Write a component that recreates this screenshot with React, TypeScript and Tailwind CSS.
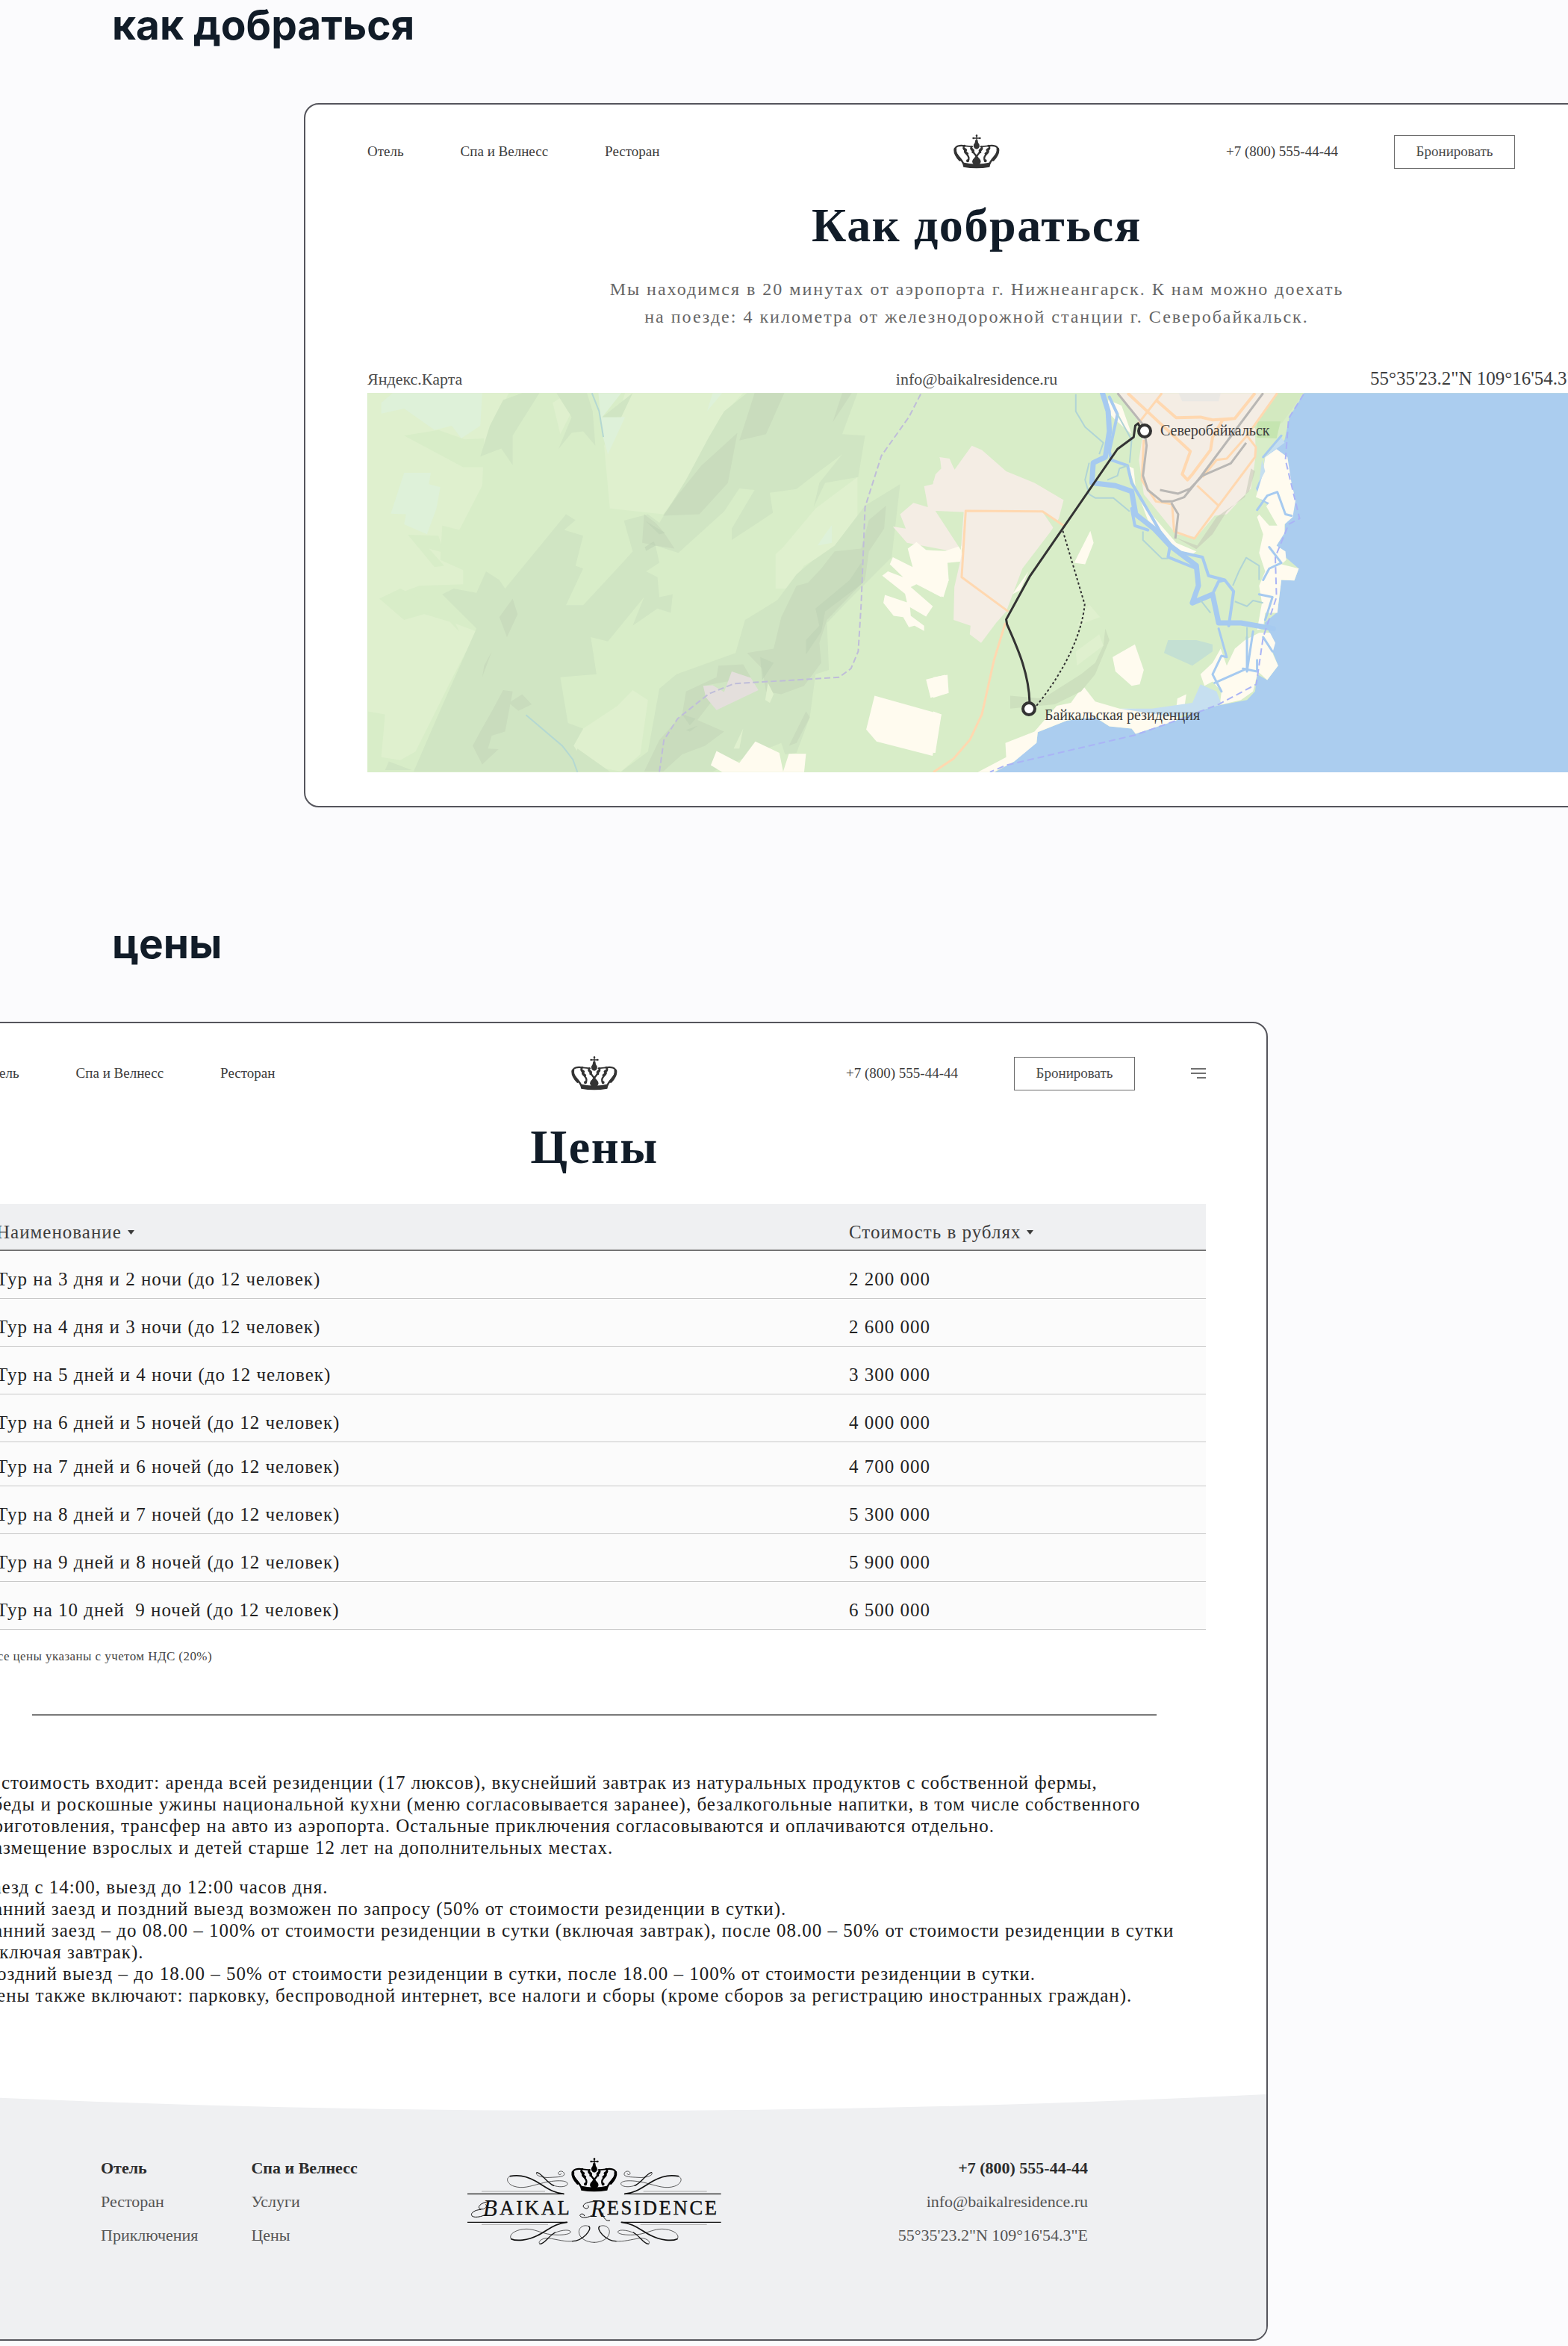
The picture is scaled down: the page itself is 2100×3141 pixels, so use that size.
import type { ReactNode } from 'react';

const navLinks = ['Отель', 'Спа и Велнесс', 'Ресторан'];

const tours = [
  { name: 'Тур на 3 дня и 2 ночи (до 12 человек)', price: '2 200 000' },
  { name: 'Тур на 4 дня и 3 ночи (до 12 человек)', price: '2 600 000' },
  { name: 'Тур на 5 дней и 4 ночи (до 12 человек)', price: '3 300 000' },
  { name: 'Тур на 6 дней и 5 ночей (до 12 человек)', price: '4 000 000' },
  { name: 'Тур на 7 дней и 6 ночей (до 12 человек)', price: '4 700 000', compact: true },
  { name: 'Тур на 8 дней и 7 ночей (до 12 человек)', price: '5 300 000' },
  { name: 'Тур на 9 дней и 8 ночей (до 12 человек)', price: '5 900 000' },
  { name: 'Тур на 10 дней  9 ночей (до 12 человек)', price: '6 500 000' },
];

const included = [
  'В стоимость входит: аренда всей резиденции (17 люксов), вкуснейший завтрак из натуральных продуктов с собственной фермы,',
  'обеды и роскошные ужины национальной кухни (меню согласовывается заранее), безалкогольные напитки, в том числе собственного',
  'приготовления, трансфер на авто из аэропорта. Остальные приключения согласовываются и оплачиваются отдельно.',
  'Размещение взрослых и детей старше 12 лет на дополнительных местах.',
];

const rules = [
  'Заезд с 14:00, выезд до 12:00 часов дня.',
  'Ранний заезд и поздний выезд возможен по запросу (50% от стоимости резиденции в сутки).',
  'Ранний заезд – до 08.00 – 100% от стоимости резиденции в сутки (включая завтрак), после 08.00 – 50% от стоимости резиденции в сутки',
  '(включая завтрак).',
  'Поздний выезд – до 18.00 – 50% от стоимости резиденции в сутки, после 18.00 – 100% от стоимости резиденции в сутки.',
  'Цены также включают: парковку, беспроводной интернет, все налоги и сборы (кроме сборов за регистрацию иностранных граждан).',
];

function CrownHalf() {
  return (
    <g fill="none" stroke="currentColor" strokeLinecap="round" strokeLinejoin="round">
      <path d="M534 224C526 204 502 190 501 170C501 154 520 150 541 154" strokeWidth="7" />
      <path d="M521 210C508 196 499 182 502 166" strokeWidth="11" />
      <path d="M539 153C531 160 537 168 541 172C538 180 546 184 550 190C557 198 559 206 553 214" strokeWidth="7" />
      <path d="M537 164L545 170L542 178L551 185" strokeWidth="9" />
      <path d="M541 154L571 157" strokeWidth="5" />
      <path d="M568 157C562 164 567 170 573 173C572 182 582 186 596 208" strokeWidth="7" />
      <path d="M568 166L574 172L573 179" strokeWidth="10" />
      <circle cx="552" cy="214" r="3" strokeWidth="6" />
    </g>
  );
}

function CrownShape() {
  return (
    <g>
      <CrownHalf />
      <g transform="translate(1175 0) scale(-1 1)">
        <CrownHalf />
      </g>
      <g fill="currentColor">
        <path d="M583 130h9l2 11 5 8q3 14-11 18q-15-4-12-18l5-8z" />
        <ellipse cx="587.5" cy="217" rx="17" ry="16" />
        <path d="M530 220Q587 234 645 220L640 239Q587 249 535 239Z" />
        <path d="M586 110h4v28h-4zM573 121h29v4h-29z" />
        <circle cx="588" cy="113" r="4" />
        <circle cx="575" cy="123" r="4" />
        <circle cx="601" cy="123" r="4" />
      </g>
    </g>
  );
}

function Flourish() {
  return (
    <g fill="none" stroke="#111" strokeLinecap="round">
      <path d="M78 253H465M78 367H478" strokeWidth="4" strokeLinecap="butt" />
      <path d="M135 243H390M135 376H402" stroke="#aaa" strokeWidth="3" strokeLinecap="butt" />
      <path d="M465 253C420 250 392 225 352 202C318 182 280 176 250 182" strokeWidth="5" />
      <path d="M250 182C228 190 240 214 264 222C300 234 330 222 370 212C400 203 470 192 480 210C484 226 440 230 415 215" strokeWidth="2" />
      <path d="M425 220C395 208 380 172 357 167" strokeWidth="4" />
      <path d="M357 167C345 176 375 190 410 187C440 185 470 186 467 172C464 158 444 160 443 170C444 178 453 177 455 172" strokeWidth="2" />
      <path d="M478 367C430 370 400 400 360 420C320 440 275 444 254 434" strokeWidth="5" />
      <path d="M254 434C240 418 270 395 315 394C345 394 370 408 400 414C430 420 488 420 493 406C490 392 440 400 420 415" strokeWidth="2" />
      <path d="M430 408C402 424 388 455 369 454" strokeWidth="4" />
      <path d="M369 454C358 445 378 430 402 431C440 436 470 446 500 443" strokeWidth="2" />
      <path d="M500 443C540 442 582 396 566 383" strokeWidth="4" />
      <path d="M566 383C545 375 528 386 526 404C526 432 558 448 588 448" strokeWidth="2" />
    </g>
  );
}

function BrandLogo() {
  return (
    <svg viewBox="78 108 1020 351" className="w-[340px] text-black" role="img" aria-label="Baikal Residence">
      <CrownShape />
      <Flourish />
      <g transform="translate(1175 0) scale(-1 1)">
        <Flourish />
      </g>
      <g fill="#111" fontFamily="'Liberation Serif', serif">
        <text x="140" y="342" fontSize="94" fontStyle="italic">B</text>
        <text x="208" y="335" fontSize="80" letterSpacing="8" stroke="#111">AIKAL</text>
        <text x="572" y="344" fontSize="98" fontStyle="italic">R</text>
        <text x="638" y="335" fontSize="80" letterSpacing="8" stroke="#111">ESIDENCE</text>
      </g>
      <g fill="none" stroke="#111" strokeWidth="3" strokeLinecap="round">
        <path d="M172 282C118 288 112 318 142 314C154 310 158 300 152 296M132 316C92 318 82 345 110 346C132 346 142 340 156 334" />
        <path d="M600 284C548 280 528 306 556 312C566 310 568 302 562 300M584 336C566 350 534 352 530 340C532 330 548 332 548 341M622 330C624 350 634 364 650 360" />
      </g>
    </svg>
  );
}

function SiteHeader() {
  return (
    <header className="grid grid-cols-[1fr_auto_1fr] items-center text-[19px] leading-6 text-[#3c3c3c]">
      <nav className="flex gap-[76px]">
        {navLinks.map((link) => (
          <a key={link} href="#" className="whitespace-nowrap">{link}</a>
        ))}
      </nav>
      <a href="#" aria-label="Baikal Residence">
        <svg viewBox="496 108 184 138" className="h-[46px] w-[62px] text-[#333]">
          <CrownShape />
        </svg>
      </a>
      <div className="flex items-center justify-end gap-[75px]">
        <a href="tel:+78005554444" className="whitespace-nowrap">+7 (800) 555-44-44</a>
        <button type="button" className="h-[45px] w-[162px] border border-[#6b6b6b] text-[#4a4a4a]">
          Бронировать
        </button>
        <button type="button" aria-label="Меню" className="flex w-5 flex-col items-end gap-1">
          <span className="h-0.5 w-full bg-[#707070]" />
          <span className="h-0.5 w-full bg-[#707070]" />
          <span className="h-0.5 w-3 bg-[#707070]" />
        </button>
      </div>
    </header>
  );
}

function MountainRelief() {
  return (
    <g transform="translate(-12 -25) scale(.5102 .3827)">
      <g fill="#dff0ce">
        <path d="M25 66H395L350 180L330 250L325 390L265 545L220 530L215 650L275 685V735L160 740L60 790L150 830L250 870L310 900L240 1080L150 1320L110 1350L60 1340L70 1190L25 1180Z" />
        <path d="M700 66H1010L950 150L900 280L860 380L800 490L660 470L645 250L680 150ZM510 100L550 66L560 130L530 210Z" />
        <path d="M1310 360L1200 470L1115 605L1095 630V750H1130L1170 670L1260 600L1310 500Z" />
        <path d="M720 1105L680 1160L590 1240L560 1310L610 1370L690 1390L740 1330L760 1140Z" />
      </g>
      <g fill="#d8edc8">
        <path d="M120 215L210 195L280 228L330 225V325H275ZM130 562L210 565L225 625L185 610L225 670L200 675ZM55 785L110 750L190 800L250 860L265 900L210 825L120 860Z" />
      </g>
      <g fill="#def1d9">
        <path d="M60 100L90 66H325L320 180L270 225L245 180L200 195L120 120L60 138Z" />
        <path d="M120 345H190L185 385L215 395L205 470L180 560L120 525L125 490L85 488Z" />
        <path d="M630 66H690L640 150H700L655 280L640 210ZM915 130L930 66H955ZM1205 600L1225 560L1243 528V590Z" />
      </g>
      <g fill="#d0e5c3">
        <path d="M430 66H475L405 215V318L375 260L320 288L345 180L380 90ZM520 66H600L615 130L622 250L590 200L560 205L525 262L560 150Z" />
        <path d="M1020 66H1310L1270 210L1330 215L1312 360L1225 380L1195 465L1210 380L1270 280L1210 340L1150 402L1080 415L1088 485L980 580V540L1040 405L1000 400L960 480L840 625L780 600L790 660L755 690L785 710L790 780L825 770L820 835L785 820L720 880L750 780L655 935L610 920L625 1050L530 1060L550 1220L590 1240L565 1300L610 1390H145L210 1190L310 890L220 770L250 750L310 765L335 690L370 720L385 750L545 490L570 510L540 545L590 565L570 670L590 680L545 808H590L700 650L720 620L697 512L760 490L790 520L860 370L920 220L960 130Z" />
        <path d="M1422 385L1400 640L1280 800L1230 870L1235 1035L1200 1050L1185 1200L1150 1325L1120 1330L1110 1290L1000 1350L930 1390H690L760 1320L790 1100L835 1050L990 975L1015 860L1100 790L1150 700L1190 655L1250 600L1330 460Z" />
        <path d="M575 1310L660 1390H560ZM80 1355L140 1385H70ZM640 150L720 66L690 150Z" />
      </g>
      <g fill="#c9dcbd">
        <path d="M1040 66H1118L1070 210L1000 232L1020 150ZM1270 66H1295L1245 168ZM995 205L970 380L895 490L800 495L840 420L900 320Z" />
        <path d="M750 490L780 520L800 550L830 610L780 600L745 590ZM405 785L418 840L390 920L370 850ZM430 1120L455 1155L420 1178L395 1150ZM380 1105L405 1110L385 1250L350 1265L340 1310L368 1312L325 1365L300 1300L320 1250L350 1180ZM350 970L325 1060L330 1020Z" />
        <path d="M1385 460L1380 540L1340 620L1330 720L1230 860L1210 940L1215 1010L1170 1090L1110 1120L1070 1110L1060 1030L1020 975L1090 960L1110 850L1150 740L1180 730L1215 680L1250 620L1320 610L1340 510Z" />
        <path d="M945 1020L1010 1015L1030 1060L905 1090L930 1140L890 1210L960 1250L910 1300L850 1330L800 1390H750L790 1280L850 1190L860 1110L940 1060ZM1175 1180L1185 1200L1150 1290L1130 1300Z" />
      </g>
      <g fill="#bccfb3" opacity=".5">
        <path d="M1320 660L1290 720L1200 820L1210 880L1175 930V980L1215 900L1225 830L1325 730ZM1055 990L1090 1010L1060 1070ZM850 1190L885 1205L870 1228ZM752 605L775 585L780 600L755 618ZM860 1245L890 1230L870 1250ZM755 515L805 555L790 560Z" />
      </g>
      <path d="M905 1090L930 1088L960 1112L980 1040L1030 1062L1050 1105L940 1175L912 1130Z" fill="#e4dfdc" />
      <path d="M1075 1080L1090 1120L1080 1150L1068 1140ZM985 1310L1010 1240L1000 1310Z" fill="#dff0ce" />
      <path d="M940 1318L1000 1360L1042 1285L1105 1325L1115 1390L1130 1328H1175L1170 1392H955L925 1368Z" fill="#fffbef" />
      <path d="M1355 1125L1530 1190L1507 1335L1360 1285L1333 1243ZM1490 1068L1540 1052L1548 1115L1502 1132Z" fill="#fffbef" />
      <path d="M1568 340L1548 295H1527L1530 330L1515 350L1508 385L1485 392L1495 465L1457 450L1422 490L1437 540L1403 533L1440 590L1560 620L1700 560Z" fill="#f4ede4" />
      <path d="M1465 587L1490 615L1540 620L1530 690L1550 720L1530 780L1465 735L1450 745L1508 812L1490 848L1448 815L1450 845L1485 880V898L1460 880L1445 885L1430 850L1405 845L1378 800L1382 772L1440 798L1435 768L1375 705L1390 690L1430 710L1395 665L1403 640L1455 675L1442 610Z" fill="#fffbef" />
      <g fill="none" stroke="#b4d8d2" strokeWidth="2">
        <path d="M613 66L632 130L643 220M440 1192L535 1300L563 1348L575 1392" vectorEffect="non-scaling-stroke" />
      </g>
      <path
        d="M1476 70L1445 150L1373 285L1330 465L1320 800L1312 970L1293 1030L1262 1060L985 1083L920 1118L838 1205L802 1280L790 1392"
        fill="none"
        stroke="#bfbdd9"
        strokeWidth="2"
        strokeDasharray="8 4"
        vectorEffect="non-scaling-stroke"
      />
    </g>
  );
}

function Coast() {
  return (
    <g transform="translate(758 -25) scale(.542 .3827)" strokeLinejoin="round">
      <path d="M916 66L880 150L868 230L820 290L812 350L797 400L810 440L870 500L868 550L848 600L870 640L903 680L892 722L860 720L850 832L818 870L840 930L838 970L852 1020L825 1070L800 1050L795 1110L775 1140L700 1160L640 1185L600 1212L540 1235L500 1258L490 1240L435 1232L400 1200L330 1212L258 1252L255 1290L230 1300L200 1355L150 1394H1700V66Z" fill="#abcdef" />

      {/* sand and shallow ground */}
      <g fill="#fffbef">
        <path d="M820 290L848 262L875 290L885 380L895 440L888 500L868 525V555L848 600L870 620L872 650L860 665L903 680L892 722L860 720L850 835L820 835L815 890L800 895L812 800L805 740L820 690L805 625L815 560L800 500L830 450L797 430L812 360Z" />
        <path d="M805 905L832 905L845 940L838 975L852 1020L825 1070L802 1040L790 1110L760 1140L708 1157L712 1110L690 1075L670 1090L660 1050L690 1010L710 960L725 1020L745 960L770 930Z" />
        <path d="M255 1290L200 1355L150 1392H110L180 1340L178 1290L250 1250L305 1160L340 1150L370 1090L400 1145L460 1170L600 1172L603 1135L625 1120L620 1170L600 1212L500 1258L490 1240L435 1232L400 1200L330 1212L258 1252Z" />
        <path d="M388 548L396 590L375 665L348 660ZM498 945L520 1035L510 1085L490 1090L450 1040L443 990ZM0 618H30L70 600V655L35 660L38 720L25 780L0 765ZM0 1060L35 1052L38 1115L0 1132ZM0 1180L20 1190L5 1325H0ZM235 690L215 755L195 770ZM432 90L465 110L490 210L450 160L430 130Z" />
        <path d="M480 320L495 330L500 400L545 500L600 590L650 620L640 630L590 610L530 510Z" />
      </g>
      <path d="M820 455L850 530L830 530L805 490Z" fill="#d8edc8" />
      <path d="M820 290L860 220L868 240L825 285ZM812 300L820 340L805 380ZM598 1200L460 1170L540 1170L640 1150L660 1085L700 1110L712 1155L640 1185Z" fill="#c6dff0" />
      <path d="M580 930H650L690 945V970L640 1020L570 975Z" fill="#c4e0d3" />

      {/* built-up areas */}
      <g fill="#f4ede4">
        <path d="M0 375L25 330L15 290L40 295L52 335L95 250L120 265L180 340L250 380L322 440L310 505L290 550L220 680L180 830L155 870L118 940L90 910L92 880L50 860L52 745L75 600H0Z" />
        <path d="M455 66H850L795 210L797 280L785 400L725 490L695 495L650 570L600 560L520 420L508 300L520 190Z" />
      </g>
      <path d="M5 478L75 482L68 615ZM270 482L322 530L300 545Z" fill="#d8edc8" />
      <path d="M850 66H915L862 170L805 210L790 180Z" fill="#d3e9c0" />
      <path d="M800 165H858L848 225L800 222Z" fill="#c5e5b0" />
      <path d="M795 340L780 410L725 480L690 560L650 612L600 572L652 600L700 500L770 430L785 330Z" fill="#c6c9b8" opacity=".6" />
      <path d="M606 66H710L705 95H615Z" fill="#eae8e4" />
      <path d="M425 890L435 930L400 1050L365 1110L300 1155L190 1170V1125L270 1135L365 1050L400 1010L420 950Z" fill="#cde0be" />
      <path d="M385 805L412 850L355 880ZM410 910L420 950L355 1020L352 970Z" fill="#dff0ce" />

      {/* rivers */}
      <g fill="none" stroke="#a6caf0" strokeLinecap="round">
        <path d="M418 66L432 130L435 200L425 290L395 310L392 380L450 390L490 410L500 490L545 540L585 600L650 670L655 740L640 800L690 770L705 870L760 870L840 890" strokeWidth="7" vectorEffect="non-scaling-stroke" />
        <path d="M435 80L455 140L435 270L440 300L480 320L490 380L540 500L560 550L600 620L665 640L680 705L720 720L742 760L730 880M585 600L580 640L650 680M490 470L498 530L530 545M693 760L705 725L720 720" strokeWidth="4" vectorEffect="non-scaling-stroke" />
        <path d="M800 475L825 425L850 412L870 490L885 495M815 290L860 215M830 605L860 660L830 680L815 720M805 770L838 780L820 860M705 890L725 990L712 985L690 1050L712 1110M775 920V1030L695 1080M790 900L775 1040M800 1000V1040L765 1030M815 920L838 970" strokeWidth="3" vectorEffect="non-scaling-stroke" />
      </g>
      <g fill="none" stroke="#b0d4d6" strokeWidth="2">
        <path d="M352 70V130L375 185L420 240L410 280M455 140L490 230L485 310M385 310L375 370L385 420L400 433H445L485 480M518 550V580L565 645H580M740 740L755 690L773 642L805 670V720M745 795L775 812L790 792L815 800M775 885V930M660 790L685 835M480 320L460 330L455 355L430 370" vectorEffect="non-scaling-stroke" />
      </g>

      {/* roads */}
      <g fill="none" stroke="#ffd8b0">
        <path d="M480 66L635 270L615 350L628 370L640 350L685 265L690 220L715 160L745 155L795 66M550 90L600 152L660 150L690 160L745 155" strokeWidth="4" vectorEffect="non-scaling-stroke" />
        <path d="M850 66L775 215L725 295L700 300L665 360M565 66L505 175M775 215L797 255L795 290L705 460L645 575L595 550L590 455L550 445L515 370L520 230M652 390L705 460M322 530L270 480L80 478L70 710L185 830M178 870L150 1000L120 1190L90 1280L50 1345L0 1392" strokeWidth="3" vectorEffect="non-scaling-stroke" />
      </g>
      <path d="M455 66L520 180L527 250L518 355L530 405L565 445H590L620 430L660 360L815 66M560 405L605 418L635 400L665 355L735 312L773 240M588 450L605 490L598 575" fill="none" stroke="#b9b7b4" strokeWidth="3" vectorEffect="non-scaling-stroke" />
      <path d="M915 70L878 155L870 300L905 505L878 525L845 640L848 780L815 920L798 1085L705 1155L600 1212L500 1262L180 1368L140 1392" fill="none" stroke="#aab4f6" strokeWidth="2" strokeDasharray="9 5" vectorEffect="non-scaling-stroke" />

      {/* route */}
      <g fill="none" stroke="#333">
        <path d="M238 1150C236 1040 205 950 182 875L180 858L238 708L455 262L495 220L499 180L506 172L512 190" strokeWidth="3" vectorEffect="non-scaling-stroke" />
        <path d="M320 548L374 805C368 900 330 1030 252 1165" strokeWidth="2" strokeDasharray="3 3" vectorEffect="non-scaling-stroke" />
      </g>
    </g>
  );
}

function RouteMap() {
  return (
    <svg viewBox="0 0 1632 508" className="block w-full bg-[#d8edc8]" role="img" aria-label="Карта маршрута">
      <MountainRelief />
      <Coast />
      <g fill="#fff" stroke="#333" strokeWidth="4">
        <circle cx="1041" cy="51" r="8" />
        <circle cx="886" cy="423" r="8" />
      </g>
      <g fill="#3c3c3c" fontFamily="'Liberation Serif', serif" fontSize="20">
        <text x="1062" y="57">Северобайкальск</text>
        <text x="907" y="438">Байкальская резиденция</text>
      </g>
    </svg>
  );
}

function SectionLabel({ children }: { children: ReactNode }) {
  return <h2 className="pl-[150px] font-['Inter',sans-serif] text-[55px] leading-[66px] font-bold text-[#111c28]">{children}</h2>;
}

function PageTitle({ children }: { children: ReactNode }) {
  return (
    <h1 className="mt-9 text-center text-[64px] leading-[80px] font-bold tracking-wide text-[#111c28]">{children}</h1>
  );
}

function SortMark() {
  return (
    <svg viewBox="0 0 9 6" className="h-1.5 w-[9px]">
      <path d="M0 0h9L4.5 6z" fill="#3c3c3c" />
    </svg>
  );
}

function PriceTable() {
  return (
    <table className="mt-9 w-full table-fixed border-collapse bg-[#fbfbfb] text-left text-[25px] leading-8 tracking-[1px]">
      <thead className="bg-[#eff0f2] text-[#3c3c3c]">
        <tr className="h-[62px] border-b-2 border-[#757575]">
          <th className="w-[1160px] pt-3.5 pl-[18px] font-normal">
            <button type="button" className="flex items-center gap-2 tracking-[1px]">
              Наименование
              <SortMark />
            </button>
          </th>
          <th className="pt-3.5 font-normal">
            <button type="button" className="flex items-center gap-2 tracking-[1px]">
              Стоимость в рублях
              <SortMark />
            </button>
          </th>
        </tr>
      </thead>
      <tbody className="text-[#222]">
        {tours.map((tour) => (
          <tr key={tour.price} className={tour.compact ? 'h-[59px] border-b border-[#c8c8c8]' : 'h-16 border-b border-[#c8c8c8]'}>
            <td className={tour.compact ? 'pt-2 pl-[18px] whitespace-pre' : 'pt-3.5 pl-[18px] whitespace-pre'}>{tour.name}</td>
            <td className={tour.compact ? 'pt-2' : 'pt-3.5'}>{tour.price}</td>
          </tr>
        ))}
      </tbody>
    </table>
  );
}

function Footer() {
  return (
    <footer>
      <svg viewBox="0 0 1800 26" preserveAspectRatio="none" className="block h-[26px] w-full">
        <path d="M0 0Q900 44 1800 0V26H0Z" fill="#eff0f2" />
      </svg>
      <div className="flex items-start bg-[#eff0f2] px-[239px] pb-[117px] text-[22px] leading-[45px] text-[#555]">
        <nav className="mt-[50px] flex w-[491px] gap-[71px]">
          <ul>
            <li><a href="#" className="font-bold text-[#2c2c2c]">Отель</a></li>
            <li><a href="#">Ресторан</a></li>
            <li><a href="#">Приключения</a></li>
          </ul>
          <ul>
            <li><a href="#" className="font-bold text-[#2c2c2c]">Спа и Велнесс</a></li>
            <li><a href="#">Услуги</a></li>
            <li><a href="#">Цены</a></li>
          </ul>
        </nav>
        <div className="mt-[59px]">
          <BrandLogo />
        </div>
        <address className="mt-[50px] ml-auto text-right not-italic">
          <p className="font-bold text-[#2c2c2c]">+7 (800) 555-44-44</p>
          <p><a href="mailto:info@baikalresidence.ru">info@baikalresidence.ru</a></p>
          <p>55°35'23.2"N 109°16'54.3"E</p>
        </address>
      </div>
    </footer>
  );
}

export default function App() {
  return (
    <main className="min-h-screen overflow-hidden bg-[#fbfbfd] pb-2 font-['Liberation_Serif',serif]">
      <section>
        <SectionLabel>как добраться</SectionLabel>
        <div className="mt-[72px] mr-[-109px] ml-[407px] rounded-[20px] border-2 border-[#55555c] bg-white px-[83px] pt-10 pb-[45px]">
          <SiteHeader />
          <PageTitle>Как добраться</PageTitle>
          <p className="mt-[27px] text-center text-[24px] leading-[37px] tracking-[2px] text-[#666]">
            Мы находимся в 20 минутах от аэропорта г. Нижнеангарск. К нам можно доехать
            <br />
            на поезде: 4 километра от железнодорожной станции г. Северобайкальск.
          </p>
          <div className="mt-12 grid grid-cols-3 items-baseline pb-0.5 text-[22px] leading-8 text-[#4a4a4a]">
            <span>Яндекс.Карта</span>
            <a href="mailto:info@baikalresidence.ru" className="text-center">info@baikalresidence.ru</a>
            <span className="text-right text-[25px] text-[#3c3c3c]">55°35'23.2"N 109°16'54.3"E</span>
          </div>
          <RouteMap />
        </div>
      </section>

      <section className="mt-[149px]">
        <SectionLabel>цены</SectionLabel>
        <div className="mt-[72px] mr-[402px] ml-[-106px] overflow-hidden rounded-[20px] border-2 border-[#55555c] bg-white pt-11">
          <div className="px-[81px]">
            <SiteHeader />
            <PageTitle>Цены</PageTitle>
            <PriceTable />
            <p className="mt-6 pl-2 text-[17px] leading-6 tracking-wide text-[#444]">Все цены указаны с учетом НДС (20%)</p>
            <hr className="mx-[66px] mt-[65px] border-t-2 border-[#7a7a7a]" />
            <div className="mt-[75px] flex flex-col gap-6 text-[25px] leading-[29px] tracking-[1px] whitespace-nowrap text-[#1c1c1c]">
              <div>
                {included.map((line) => (
                  <p key={line}>{line}</p>
                ))}
              </div>
              <div>
                {rules.map((line) => (
                  <p key={line}>{line}</p>
                ))}
              </div>
            </div>
          </div>
          <div className="mt-[118px]">
            <Footer />
          </div>
        </div>
      </section>
    </main>
  );
}
